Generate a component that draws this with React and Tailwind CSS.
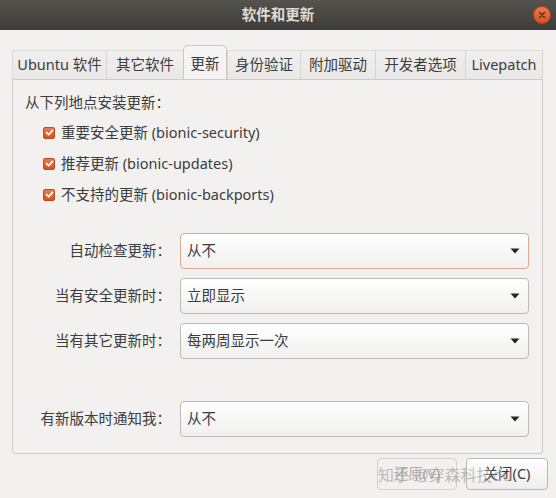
import React from "react";

const FONT = { fontFamily: '"Noto Sans", "Noto Sans CJK SC", sans-serif' };

function Check() {
  return (
    <span className="w-[12px] h-[12px] rounded-[2px] bg-gradient-to-b from-[#ea7a4c] to-[#d4541f] border border-[#c04a1a] flex items-center justify-center shrink-0">
      <svg width="9" height="9" viewBox="0 0 10 10">
        <path d="M1.8 5.2 L4.1 7.4 L8.3 2.6" fill="none" stroke="#ffffff" strokeWidth="2" strokeLinecap="round" strokeLinejoin="round" />
      </svg>
    </span>
  );
}

function Combo({ label, value, focus }) {
  return (
    <div className="flex items-center h-[36px]">
      <div className="w-[158px] text-right text-[#3c3c3c] pr-[0px]">{label}</div>
      <div
        className={
          "ml-[9px] w-[349px] h-[36px] rounded-[4px] border flex items-center justify-between pl-[6px] pr-[8px] bg-gradient-to-b from-[#ffffff] to-[#f1f0ef] " +
          (focus ? "border-[#e2a58f]" : "border-[#bdbbb7]")
        }
      >
        <span className="text-[#3c3c3c]">{value}</span>
        <svg width="10" height="6" viewBox="0 0 10 6">
          <path d="M0.5 0.5 L9.5 0.5 L5 5.5 Z" fill="#222" />
        </svg>
      </div>
    </div>
  );
}

export default function App() {
  const tabs = [
    ["Ubuntu 软件", 95],
    ["其它软件", 76],
    ["更新", 44],
    ["身份验证", 74],
    ["附加驱动", 75],
    ["开发者选项", 90],
    ["Livepatch", 77],
  ];
  return (
    <div className="w-[556px] h-[498px] bg-[#f2f1f0] flex flex-col text-[14.5px] relative overflow-hidden" style={FONT}>
      <div className="h-[30px] shrink-0 bg-gradient-to-b from-[#55534e] to-[#3d3c38] flex items-center justify-center relative">
        <span className="text-[#dfdbd2] font-bold text-[14.5px]">软件和更新</span>
        <div className="absolute right-[5px] top-[6px] w-[18px] h-[18px] rounded-full bg-gradient-to-b from-[#f07a4a] to-[#d9501c] border border-[#b84417] flex items-center justify-center">
          <svg width="8" height="8" viewBox="0 0 8 8">
            <path d="M1.5 1.5 L6.5 6.5 M6.5 1.5 L1.5 6.5" stroke="#4a2a1e" strokeWidth="1.4" strokeLinecap="round" />
          </svg>
        </div>
      </div>

      <div className="pl-[12px] pt-[15px] flex flex-col">
        <div className="flex items-end h-[34px]">
          {tabs.map(([t, w], i) =>
            i === 2 ? (
              <div
                key={t}
                style={{ width: w }}
                className="h-[34px] flex items-center justify-center bg-[#f5f4f3] border border-b-0 border-[#c9c7c3] rounded-t-[5px] text-[#3c3c3c] pt-[3px]"
              >
                {t}
              </div>
            ) : (
              <div
                key={t}
                style={{ width: w }}
                className={
                  "h-[29px] flex items-center justify-center bg-gradient-to-b from-[#f0efed] to-[#e9e8e6] border-t border-[#dcdad6] text-[#3c3c3c] " +
                  (i === 0 || i === 3 ? "border-l " : "") +
                  (i !== 1 && i !== 2 ? "border-r border-r-[#d6d4d0]" : "") +
                  (i === 6 ? " border-r-[#cfcdc9]" : "")
                }
              >
                {t}
              </div>
            )
          )}
        </div>

        <div className="w-[531px] h-[375px] border border-[#cdcbc7] rounded-b-[3px] flex flex-col">
          <div className="pl-[12px] pt-[12px] leading-[20px] text-[#3c3c3c]">从下列地点安装更新：</div>
          <div className="mt-[5px] flex flex-col pl-[30px] text-[#3c3c3c]">
            {["重要安全更新 (bionic-security)", "推荐更新 (bionic-updates)", "不支持的更新 (bionic-backports)"].map((t) => (
              <div key={t} className="h-[31px] flex items-center gap-[6px]">
                <Check />
                <span>{t}</span>
              </div>
            ))}
          </div>
          <div className="mt-[23px] flex flex-col gap-[9px]">
            <Combo label="自动检查更新：" value="从不" focus />
            <Combo label="当有安全更新时：" value="立即显示" />
            <Combo label="当有其它更新时：" value="每两周显示一次" />
          </div>
          <div className="mt-[42px]">
            <Combo label="有新版本时通知我：" value="从不" />
          </div>
        </div>

        <div className="mt-[4px] flex justify-end gap-[9px] pr-[8px]">
          <div className="w-[80px] h-[32px] rounded-[4px] border border-[#d3d1cd] bg-[#f2f1f0] flex items-center justify-center text-[#aeaca8]">
            还原(V)
          </div>
          <div className="w-[82px] h-[32px] rounded-[4px] border border-[#b9b7b3] bg-gradient-to-b from-[#ffffff] to-[#efeeed] flex items-center justify-center text-[#3c3c3c]">
            关闭(C)
          </div>
        </div>
      </div>

      <div className="absolute left-[378px] top-[463px] text-[16px] text-[#9a9894] opacity-60 pointer-events-none">
        知乎 @穿森科技ou
      </div>
    </div>
  );
}
